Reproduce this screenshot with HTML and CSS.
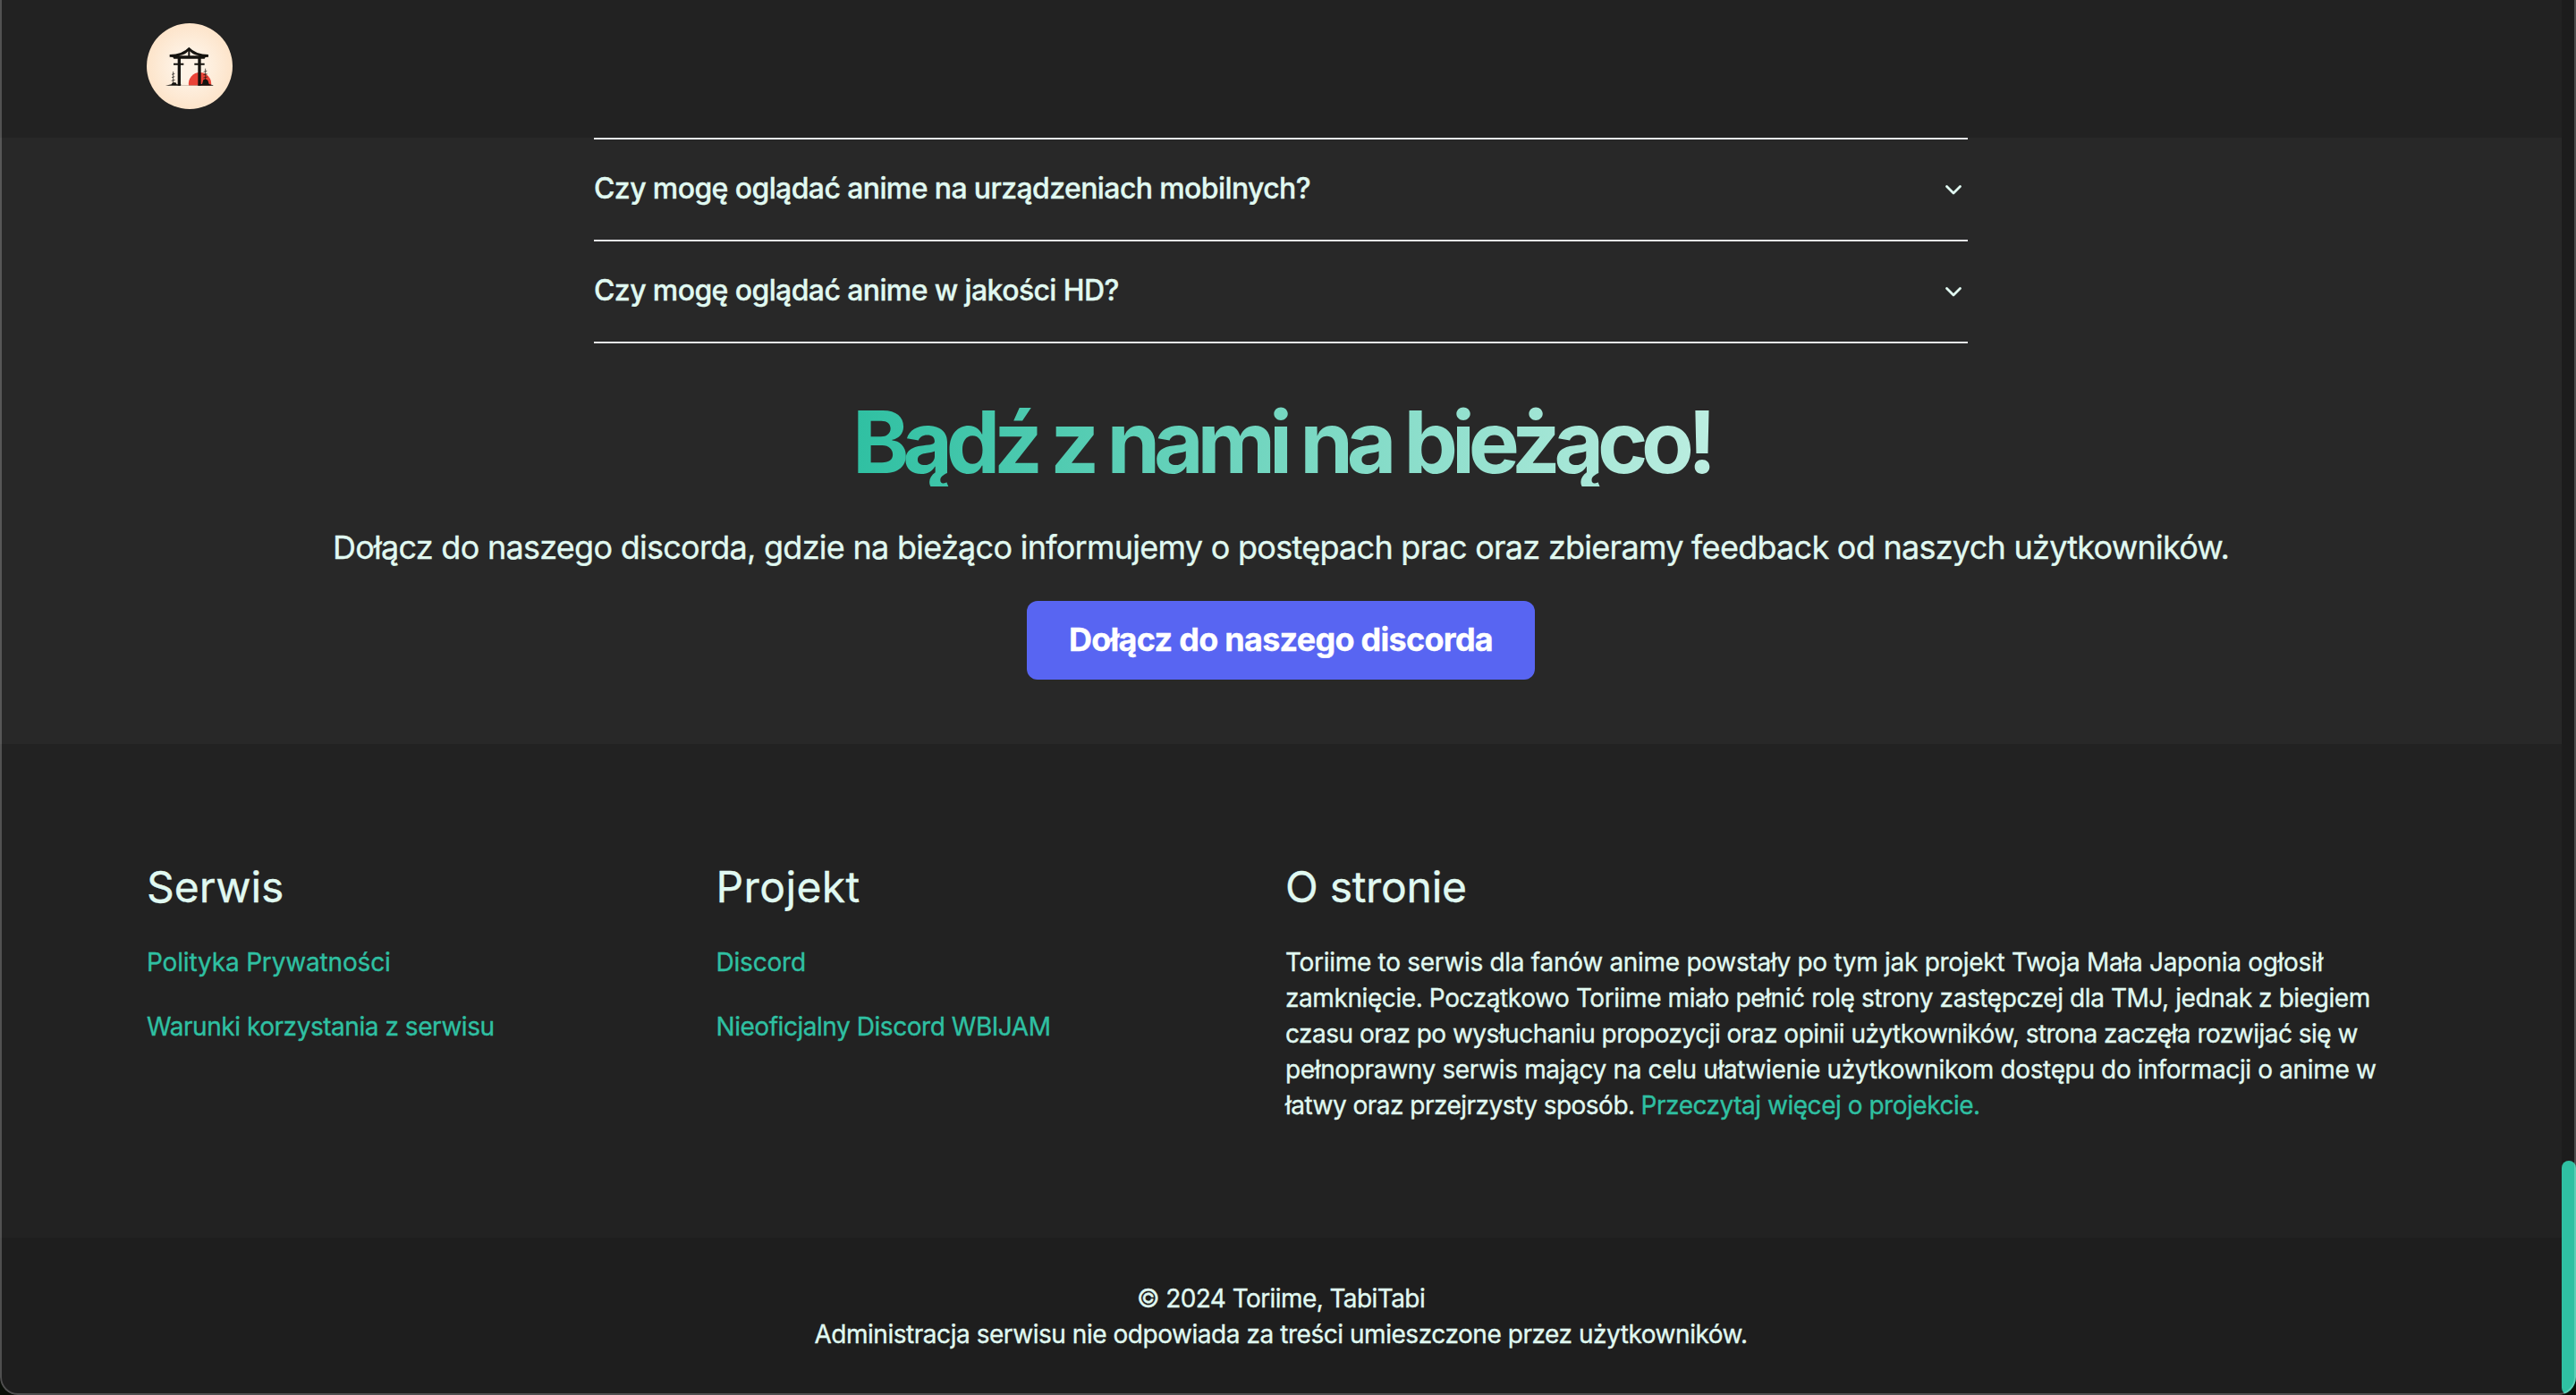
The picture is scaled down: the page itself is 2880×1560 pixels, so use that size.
FILE: index.html
```html
<!DOCTYPE html>
<html lang="pl">
<head>
<meta charset="utf-8">
<title>Toriime</title>
<link rel="stylesheet" href="styles.css">
</head>
<body>
<div class="window">
  <div class="page">
    <header class="topbar">
      <svg class="logo" viewBox="0 0 288 288" role="img" aria-label="Toriime">
        <defs>
          <radialGradient id="cream"><stop offset="0.3" stop-color="#fef3e6"/><stop offset="1" stop-color="#fde4ca"/></radialGradient>
        </defs>
        <circle cx="144" cy="144" r="144" fill="url(#cream)"/>
        <path d="M141 209a38 38 0 1 1 75 0z" fill="#ea4438"/>
        <g fill="#15130f">
          <path d="M77 105q42 0 65-25q23 25 65 25v8l-10 1-3 5H91l-3-5-11-1z"/>
          <path d="M104 117h10v92h-10zM172 117h10v92h-10z"/>
          <path d="M90 134h34v6H90zM160 134h34v6h-34z"/>
          <path d="M63 209l20-4 4-6h10l4 6h14v4zM170 209l6-5h10l4-14 7-3 8 4 4 13 14 4v1z"/>
        </g>
        <path d="M108 109q22-3 31-15v15zM145 94q9 12 31 15h-31z" fill="#fdf0e2"/>
        <path d="M89 200v-38M84 172l10-3M84 182l10-3M83 193l12-3M197 190v-38M191 163l11-3M190 173l13-3M190 183l14-3" stroke="#15130f" stroke-width="2" fill="none"/>
        <path d="M116 208.500H172" stroke="#a89b8d" stroke-width="1.500"/>
      </svg>
    </header>
    <main class="content">
      <section class="faq">
        <div class="faq-item">
          <span class="question">Czy mogę oglądać anime na urządzeniach mobilnych?</span>
          <svg class="chevron" viewBox="0 0 32 32"><path d="M8.500 12.500l7.500 7.500 7.500-7.500"/></svg>
        </div>
        <div class="faq-item">
          <span class="question">Czy mogę oglądać anime w jakości HD?</span>
          <svg class="chevron" viewBox="0 0 32 32"><path d="M8.500 12.500l7.500 7.500 7.500-7.500"/></svg>
        </div>
      </section>
      <section class="community">
        <h2 class="headline">Bądź z nami na bieżąco!</h2>
        <p class="lead">Dołącz do naszego discorda, gdzie na bieżąco informujemy o postępach prac oraz zbieramy feedback od naszych użytkowników.</p>
        <a class="discord-button">Dołącz do naszego discorda</a>
      </section>
    </main>
    <footer class="footer">
      <div class="column">
        <h3 class="column-title title-service">Serwis</h3>
        <a class="link link-privacy">Polityka Prywatności</a>
        <a class="link">Warunki korzystania z serwisu</a>
      </div>
      <div class="column">
        <h3 class="column-title title-project">Projekt</h3>
        <a class="link link-discord">Discord</a>
        <a class="link">Nieoficjalny Discord WBIJAM</a>
      </div>
      <div class="column about">
        <h3 class="column-title">O stronie</h3>
        <div class="about-text">
          <span class="line line-1">Toriime to serwis dla fanów anime powstały po tym jak projekt Twoja Mała Japonia ogłosił</span>
          <span class="line line-2">zamknięcie. Początkowo Toriime miało pełnić rolę strony zastępczej dla TMJ, jednak z biegiem</span>
          <span class="line line-3">czasu oraz po wysłuchaniu propozycji oraz opinii użytkowników, strona zaczęła rozwijać się w</span>
          <span class="line line-4">pełnoprawny serwis mający na celu ułatwienie użytkownikom dostępu do informacji o anime w</span>
          <div class="line line-5"><span>łatwy oraz przejrzysty sposób.</span><a class="accent">Przeczytaj więcej o projekcie.</a></div>
        </div>
      </div>
    </footer>
    <div class="legal">
      <p class="copyright">© 2024 Toriime, TabiTabi</p>
      <p>Administracja serwisu nie odpowiada za treści umieszczone przez użytkowników.</p>
    </div>
  </div>
  <div class="scroll-rail"><div class="scroll-thumb"></div></div>
</div>
</body>
</html>
```
FILE: styles.css
```css
* { box-sizing: border-box; }
body {
  margin: 0;
  height: 1560px;
  background: #0a0f08;
  color: #e0f9f1;
  font-family: Inter, "Liberation Sans", sans-serif;
  -webkit-text-stroke: 0.35px currentColor;
  overflow: hidden;
}
h2, h3, p { margin: 0; }

/* Browser window frame */
.window {
  position: relative;
  display: flex;
  width: 2880px;
  height: 1560px;
  border-radius: 0 0 20px 20px;
  overflow: hidden;
  background: #1e1e1e;
}
.window::after {
  content: "";
  position: absolute;
  inset: -20px 0 0;
  border: 2px solid rgba(255, 255, 255, 0.22);
  border-radius: 20px;
}
.page { width: 2864px; display: flex; flex-direction: column; }
.scroll-rail { width: 16px; padding-top: 1298px; background: #1c1c1c; }
.scroll-thumb { height: 262px; border-radius: 8px; background: #2fc0a2; }

.topbar { height: 154px; padding: 26px 164px; background: #222; }
.logo { display: block; width: 96px; height: 96px; }

.content {
  height: 678px;
  background: #282828;
  display: flex;
  flex-direction: column;
  align-items: center;
}
.faq { width: 1536px; border-top: 2px solid #e5e7eb; }
.faq-item {
  display: flex;
  justify-content: space-between;
  align-items: center;
  height: 114px;
  border-bottom: 2px solid #e5e7eb;
  font-size: 32px;
  font-weight: 500;
  letter-spacing: -0.61px;
}
.question { padding-bottom: 3px; }
.chevron {
  width: 32px;
  height: 32px;
  fill: none;
  stroke: currentColor;
  stroke-width: 2.8;
  stroke-linecap: round;
  stroke-linejoin: round;
}

.community { display: flex; flex-direction: column; align-items: center; padding-top: 64px; }
.headline {
  height: 96px;
  margin-left: 9px;
  padding-right: 8px;
  font-size: 96px;
  line-height: 93px;
  font-weight: 700;
  letter-spacing: -7.25px;
  -webkit-text-stroke: 0;
  color: transparent;
  background: linear-gradient(to right, #2fc0a2, #bdeee1);
  background-clip: text;
}
.lead {
  margin-top: 42px;
  font-size: 36px;
  line-height: 52px;
  letter-spacing: -0.73px;
  white-space: nowrap;
}
.discord-button {
  margin-top: 34px;
  width: 568px;
  height: 88px;
  border-radius: 12px;
  background: #5865f2;
  color: #fff;
  font-size: 36px;
  line-height: 87px;
  font-weight: 700;
  letter-spacing: -0.73px;
  text-align: center;
}

.footer {
  display: grid;
  grid-template-columns: repeat(4, 1fr);
  height: 552px;
  padding: 128px 154px 0 164px;
  background: #222;
}
.about { grid-column: span 2; }
.column { display: flex; flex-direction: column; align-items: flex-start; }
.column-title {
  margin-bottom: 32px;
  font-size: 48px;
  line-height: 64px;
  font-weight: 400;
  letter-spacing: -0.28px;
}
.title-service { letter-spacing: -0.03px; }
.title-project { letter-spacing: 0.39px; }

.link, .about-text, .legal {
  font-size: 28px;
  line-height: 40px;
  letter-spacing: -0.455px;
}
.link { margin-bottom: 32px; color: #2fc0a2; }
.link-privacy { letter-spacing: -0.165px; }
.link-discord { letter-spacing: -0.19px; }

.line { display: block; white-space: nowrap; }
.line-1 { letter-spacing: -0.29px; }
.line-2 { letter-spacing: -0.41px; }
.line-3 { letter-spacing: -0.515px; }
.line-4 { letter-spacing: -0.355px; }
.line-5 { display: flex; gap: 7px; letter-spacing: -0.52px; }
.accent { color: #2fc0a2; letter-spacing: -0.475px; }

.legal { flex: 1; padding-top: 48px; background: #1e1e1e; text-align: center; }
.copyright { letter-spacing: -0.58px; }
```
